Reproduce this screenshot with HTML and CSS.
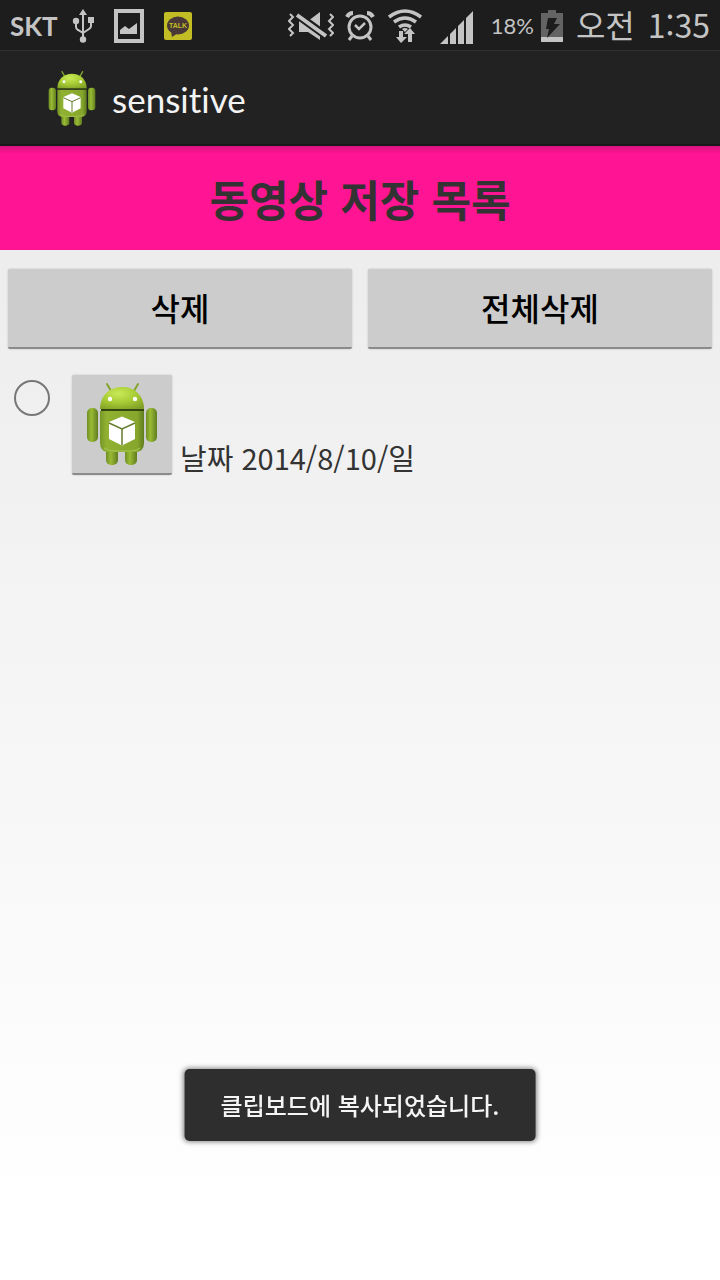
FILE: index.html
```html
<!DOCTYPE html>
<html lang="ko">
<head>
<meta charset="utf-8">
<meta name="viewport" content="width=device-width, initial-scale=1">
<title>sensitive</title>
<link rel="stylesheet" href="styles.css">
</head>
<body>
<svg class="defs" width="0" height="0" aria-hidden="true">
  <defs>
    <linearGradient id="limb" x1="0" x2="1" y1="0" y2="0">
      <stop offset="0" stop-color="#6f8f25"/><stop offset=".4" stop-color="#9aba35"/><stop offset="1" stop-color="#5f7d1e"/>
    </linearGradient>
    <linearGradient id="torso" x1="0" x2="1" y1="0" y2="0">
      <stop offset="0" stop-color="#769629"/><stop offset=".15" stop-color="#91b132"/><stop offset=".85" stop-color="#86a62c"/><stop offset="1" stop-color="#5f7d1e"/>
    </linearGradient>
    <radialGradient id="head" cx=".42" cy=".3" r=".8">
      <stop offset="0" stop-color="#c8ea58"/><stop offset=".5" stop-color="#a8cc35"/><stop offset="1" stop-color="#7f9f26"/>
    </radialGradient>
    <symbol id="robot" viewBox="0 0 96 96">
      <path d="M33 7l4 7M64 7l-4 7" stroke="#85a52c" stroke-width="2" stroke-linecap="round"/>
      <rect x="32" y="66" width="12" height="22" rx="5" fill="url(#limb)"/>
      <rect x="51" y="66" width="12" height="22" rx="5" fill="url(#limb)"/>
      <rect x="13" y="31" width="11" height="34" rx="5" fill="url(#limb)"/>
      <rect x="72" y="31" width="11" height="34" rx="5" fill="url(#limb)"/>
      <path d="M26 34h44v32q0 9-9 9H35q-9 0-9-9z" fill="url(#torso)"/>
      <path d="M30 71q4 3 9 3h18q6 0 9-3" fill="none" stroke="#a9c855" stroke-width="1"/>
      <path d="M27 33h43" stroke="#34470f" stroke-width="2"/>
      <path d="M26 32C26 18 36 10 48 10s22 8 22 22z" fill="url(#head)"/>
      <circle cx="36" cy="22" r="2.2" fill="#fff"/><circle cx="61" cy="22" r="2.2" fill="#fff"/>
      <path d="M48 39.500L61 45v17l-13 6.500L35 62V45z" fill="#fff"/>
      <path d="M35 46l13 6 13-6M48 52v16" fill="none" stroke="#657c2c" stroke-width="1.500"/>
    </symbol>
  </defs>
</svg>

<div class="status">
  <div class="status-left">
    <span class="carrier">SKT</span>
    <svg width="22" height="36" viewBox="0 0 22 36" aria-label="USB">
      <g fill="none" stroke="#c4c4c4" stroke-width="2"><path d="M11 5v26M4 13v6q0 2 2 3l5 3M19 12v6q0 2-2 3l-6 4"/></g>
      <path d="M11 1l4 6H7z" fill="#c4c4c4"/><circle cx="4" cy="13" r="3.200" fill="#c4c4c4"/><path d="M16 9h6v6h-6z" fill="#c4c4c4"/><circle cx="11" cy="31.500" r="3.200" fill="#c4c4c4"/>
    </svg>
    <svg width="30" height="34" viewBox="0 0 30 34" aria-label="스크린샷">
      <path d="M2 2h26v30H2z" fill="none" stroke="#c4c4c4" stroke-width="4"/><path d="M6 25v-4l5-4 4 3 8-6v11z" fill="#c4c4c4"/>
    </svg>
    <svg width="28" height="28" viewBox="0 0 28 28" aria-label="TALK">
      <rect width="28" height="28" rx="2" fill="#c2bd25"/><ellipse cx="14" cy="13.500" rx="11" ry="9" fill="#483836"/><path d="M7 19l1 6 6-4z" fill="#483836"/>
      <text x="14" y="16" class="talk-text">TALK</text>
    </svg>
  </div>
  <div class="status-right">
    <svg width="46" height="34" viewBox="0 0 46 34" aria-label="진동">
      <path d="M11 12h9L32 3v28l-12-8h-9z" fill="#c4c4c4"/>
      <path d="M8 5l31 22.500" stroke="#1d1d1d" stroke-width="8"/><path d="M9 6l29 21" stroke="#c4c4c4" stroke-width="4"/>
      <path d="M2 5l3 3-4 4 4 4-4 4 4 4-3 3M42 5l3 3-4 4 4 4-4 4 4 4-3 3" fill="none" stroke="#c4c4c4" stroke-width="2"/>
    </svg>
    <svg class="alarm" width="30" height="30" viewBox="0 0 30 30" aria-label="알람">
      <g fill="none" stroke="#c4c4c4"><circle cx="15" cy="16" r="11" stroke-width="3"/><path d="M10 14l4 4 6-6" stroke-width="2.500"/><path d="M2 6q2-4 6-4M22 2q4 0 6 4" stroke-width="4"/><path d="M7 25l-3 4M23 25l3 4" stroke-width="3"/></g>
    </svg>
    <svg class="wifi" width="34" height="36" viewBox="0 0 34 36" aria-label="Wi-Fi">
      <g fill="none" stroke="#c4c4c4" stroke-width="3.500"><path d="M1 9q16-12 32 0"/><path d="M6 14q11-8 22 0"/><path d="M11 19q6-4 12 0"/></g>
      <path d="M14 21q3-2 6 0l-3 3z" fill="#c4c4c4"/>
      <path d="M11 23h4v6h4l-6 6-5-6h3zM20 34v-8h-4l6-6 5 6h-3v8z" fill="#c4c4c4"/>
    </svg>
    <svg class="signal" width="34" height="36" viewBox="0 0 34 36" aria-label="신호">
      <path d="M0 36l8-8v8zM10 26l6-6v16h-6zM18 18l6-6v24h-6zM26 10l7-7v33h-7z" fill="#c4c4c4"/>
    </svg>
    <span class="percent">18%</span>
    <svg class="battery" width="22" height="32" viewBox="0 0 22 32" aria-label="배터리">
      <path d="M7 0h8v3h7v24H0V3h7z" fill="#646464"/><path d="M0 27h22v5H0z" fill="#c4c4c4"/><path d="M7 8h9l-3 6h6L6 28l2-9H5z" fill="#1d1d1d"/>
    </svg>
    <span class="meridiem">오전</span>
    <time class="clock">1:35</time>
  </div>
</div>

<header class="appbar">
  <svg class="app-icon" aria-hidden="true"><use href="#robot"/></svg>
  <span class="app-name">sensitive</span>
</header>

<main>
  <h1 class="title">동영상 저장 목록</h1>
  <div class="actions">
    <button class="btn" type="button">삭제</button>
    <button class="btn" type="button">전체삭제</button>
  </div>
  <div class="item">
    <input class="pick" type="radio" name="video" id="video-1">
    <button class="thumb" type="button" aria-label="동영상 재생"><svg class="thumb-icon" aria-hidden="true"><use href="#robot"/></svg></button>
    <label class="date" for="video-1">날짜 2014/8/10/일</label>
  </div>
</main>

<div class="toast" role="status">클립보드에 복사되었습니다.</div>
</body>
</html>
```
FILE: styles.css
```css
* { box-sizing: border-box; }

body {
  margin: 0;
  min-height: 100vh;
  display: flex;
  flex-direction: column;
  font-family: "Noto Sans CJK KR", sans-serif;
  color: #333;
  background: linear-gradient(#e8e8e8, #fff 95%);
}

.defs { position: absolute; }
svg { display: block; flex: none; }

.status {
  display: flex;
  justify-content: space-between;
  height: 51px;
  padding: 2px 10px 0;
  background: #1d1d1d;
  border-bottom: 1px solid #303030;
  color: #c4c4c4;
  line-height: 48px;
  white-space: nowrap;
}
.status-left, .status-right { display: flex; align-items: center; }
.status-left { gap: 20px; }
.carrier { width: 42px; font-family: Lato, sans-serif; font-size: 26px; font-weight: 700; }
.talk-text { font: 700 7px "Liberation Sans", sans-serif; fill: #c2bd25; text-anchor: middle; }

.alarm { margin-left: 11px; }
.wifi { margin-left: 13px; }
.signal { margin-left: 18px; }
.percent { margin-left: 17px; font-family: Lato, sans-serif; font-size: 22px; }
.battery { margin-left: 7px; }
.meridiem { margin-left: 13px; font-size: 32px; line-height: 44px; margin-bottom: 4px; }
.clock { margin-left: 13px; font-size: 32px; line-height: 44px; margin-bottom: 4px; }

.appbar {
  display: flex;
  align-items: center;
  gap: 8px;
  height: 95px;
  padding: 2px 40px 0;
  background: #222;
  border-bottom: 2px solid #1a1a1a;
}
.app-icon { width: 64px; height: 64px; }
.app-name {
  color: #f3f3f3;
  font-family: Lato, sans-serif;
  font-size: 35px;
  font-variant-ligatures: none;
}

.title {
  margin: 0;
  padding: 20px 8px;
  background: linear-gradient(#d91480, #ff1493 8px);
  font-size: 43px;
  line-height: 64px;
  font-weight: 700;
  text-align: center;
}

.actions {
  display: grid;
  grid-template-columns: 1fr 1fr;
  gap: 16px;
  padding: 19px 8px 26px;
}
.btn, .thumb {
  border: 0;
  border-bottom: 2px solid #8b8b8b;
  border-radius: 2px;
  background: #ccc;
  box-shadow: 0 0 2px #bbb;
}
.btn {
  height: 80px;
  padding: 0 0 2px;
  color: #000;
  font-family: inherit;
  font-size: 32px;
  font-weight: 500;
  line-height: 48px;
}

.item { display: flex; align-items: flex-start; padding: 0 14px; }
.pick {
  appearance: none;
  flex: none;
  width: 36px;
  height: 36px;
  margin: 5px 22px 0 0;
  border: 2px solid #777;
  border-radius: 50%;
}
.pick:checked { background: radial-gradient(#33b5e5 8px, transparent 9px); }
.thumb { flex: none; padding: 2px 2px 0; }
.thumb-icon { width: 96px; height: 96px; }
.date { align-self: flex-end; margin-left: 8px; font-size: 29px; line-height: 36px; }

.toast {
  position: fixed;
  bottom: 139px;
  left: 50%;
  transform: translateX(-50%);
  padding: 18px 36px;
  border-radius: 5px;
  background: #2e2e2e;
  box-shadow: 0 0 5px 1px #888;
  color: #f5f5f5;
  font-size: 24px;
  font-weight: 500;
  line-height: 36px;
  white-space: nowrap;
}
```
